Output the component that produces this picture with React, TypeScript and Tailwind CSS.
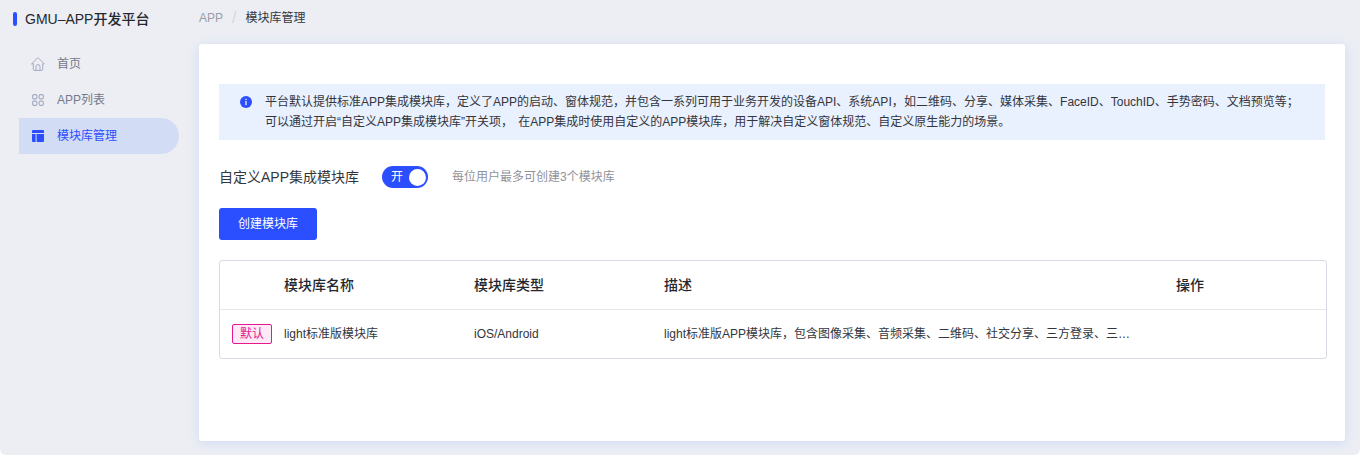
import React from 'react';

const fontStack = { fontFamily: '"Liberation Sans", "Noto Sans CJK SC", sans-serif' };

function HomeIcon() {
  return (
    <svg width="14" height="14" viewBox="0 0 14 14" fill="none" stroke="#a4aac2" strokeWidth="1" strokeLinejoin="round" strokeLinecap="round">
      <path d="M0.7 6.9 L6.3 1.2 Q7 0.6 7.7 1.2 L13.3 6.9 H11.7 V12.5 Q11.7 13.4 10.8 13.4 H3.2 Q2.3 13.4 2.3 12.5 V6.9 Z" />
      <path d="M5 13.4 V9.6 A2 2 0 0 1 9 9.6 V13.4" />
    </svg>
  );
}

function GridIcon() {
  return (
    <svg width="12" height="12" viewBox="0 0 12 12" fill="none" stroke="#a4aac2" strokeWidth="1.1">
      <rect x="0.6" y="0.6" width="4.3" height="4.3" rx="1.4" />
      <rect x="7.1" y="0.6" width="4.3" height="4.3" rx="1.4" />
      <rect x="0.6" y="7.1" width="4.3" height="4.3" rx="1.4" />
      <rect x="7.1" y="7.1" width="4.3" height="4.3" rx="1.4" />
    </svg>
  );
}

function LayoutIcon() {
  return (
    <svg width="12" height="12" viewBox="0 0 12 12" fill="#2b4eff">
      <path d="M1 0 H11 A1 1 0 0 1 12 1 V3 H0 V1 A1 1 0 0 1 1 0 Z" />
      <path d="M0 4 H3.6 V12 H1 A1 1 0 0 1 0 11 Z" />
      <path d="M4.6 4 H12 V11 A1 1 0 0 1 11 12 H4.6 Z" />
    </svg>
  );
}

function InfoIcon() {
  return (
    <svg width="12" height="12" viewBox="0 0 12 12" className="shrink-0">
      <circle cx="6" cy="6" r="6" fill="#2b4eff" />
      <rect x="5.4" y="2.8" width="1.2" height="1.2" fill="#fff" />
      <rect x="5.4" y="4.9" width="1.2" height="4.2" fill="#fff" />
    </svg>
  );
}

const menu = [
  { label: '首页', icon: <HomeIcon />, active: false },
  { label: 'APP列表', icon: <GridIcon />, active: false },
  { label: '模块库管理', icon: <LayoutIcon />, active: true },
];

export default function App() {
  return (
    <div className="flex h-[455px] w-[1360px] overflow-hidden rounded-b-md bg-[#eceef3]" style={fontStack}>
      {/* Sidebar */}
      <aside className="w-[199px] shrink-0">
        <div className="flex h-[38px] items-center pl-[13px]">
          <span className="h-[14px] w-1 rounded-sm bg-[#2b4eff]" />
          <span className="ml-2 text-sm font-medium text-[#25272e]">GMU–APP开发平台</span>
        </div>
        <nav className="mt-2 flex flex-col">
          {menu.map((item) => (
            <div
              key={item.label}
              className={`flex h-9 w-40 ml-[19px] items-center rounded-r-[18px] pl-3 text-xs ${
                item.active ? 'bg-[#d3dcf5] text-[#2b4eff]' : 'text-[#737a8c]'
              }`}
            >
              <span className="flex w-[14px] justify-center">{item.icon}</span>
              <span className="ml-3">{item.label}</span>
            </div>
          ))}
        </nav>
      </aside>

      {/* Main */}
      <main className="flex w-[1146px] flex-col">
        <div className="flex h-11 items-center pb-2 text-xs">
          <span className="text-[#9a9da6]">APP</span>
          <span className="ml-[9px] mr-[9px] text-base font-light text-[#d4d6dc]">/</span>
          <span className="text-[#33363d]">模块库管理</span>
        </div>

        <div className="h-[397px] rounded-[3px] bg-white px-5 pt-10 shadow-[0_2px_12px_#cfdaf5]">
          <div className="flex h-14 w-[1106px] items-start gap-[13px] bg-[#e9f0fe] pl-[21px] pt-2 text-xs leading-5 text-[#33363d]">
            <span className="pt-1">
              <InfoIcon />
            </span>
            <p className="whitespace-nowrap">
              <span className="[word-spacing:-3px]">
                平台默认提供标准APP集成模块库，定义了APP的启动、窗体规范，并包含一系列可用于业务开发的设备API、系统API， 如二维码、分享、媒体采集、FaceID、TouchID、手势密码、文档预览等；
              </span>
              <br />
              <span className="[word-spacing:2px]">
                可以通过开启“自定义APP集成模块库”开关项， 在APP集成时使用自定义的APP模块库，用于解决自定义窗体规范、自定义原生能力的场景。
              </span>
            </p>
          </div>

          <div className="mt-[26px] flex h-[22px] items-center">
            <span className="w-[163px] text-sm text-[#33363d]">自定义APP集成模块库</span>
            <div className="flex h-[22px] w-[46px] items-center justify-between rounded-full bg-[#2b4eff] pl-[9px] pr-[2px] text-xs text-white">
              <span>开</span>
              <span className="size-[17px] rounded-full bg-white" />
            </div>
            <span className="ml-6 text-xs text-[#8f929a]">每位用户最多可创建3个模块库</span>
          </div>

          <button className="mt-5 block h-8 w-[98px] rounded-[3px] bg-[#2b4eff] text-xs text-white">
            创建模块库
          </button>

          <div className="mt-5 w-[1108px] rounded-[3px] border border-[#d8dbe4] text-xs text-[#33363d]">
            <div className="flex h-[49px] items-center border-b border-[#e4e6ec] text-sm font-medium text-[#25272e]">
              <span className="ml-16 w-[190px]">模块库名称</span>
              <span className="w-[190px]">模块库类型</span>
              <span className="w-[512px]">描述</span>
              <span>操作</span>
            </div>
            <div className="flex h-12 items-center">
              <span className="ml-3 flex h-5 w-10 items-center justify-center rounded-[2px] border border-[#e6198c] bg-[#fdeaf6] text-xs text-[#e6198c]">
                默认
              </span>
              <span className="ml-3 w-[190px]">light标准版模块库</span>
              <span className="w-[190px]">iOS/Android</span>
              <span className="w-[467px] truncate">
                light标准版APP模块库，包含图像采集、音频采集、二维码、社交分享、三方登录、三方支付等能力
              </span>
            </div>
          </div>
        </div>
      </main>
    </div>
  );
}
